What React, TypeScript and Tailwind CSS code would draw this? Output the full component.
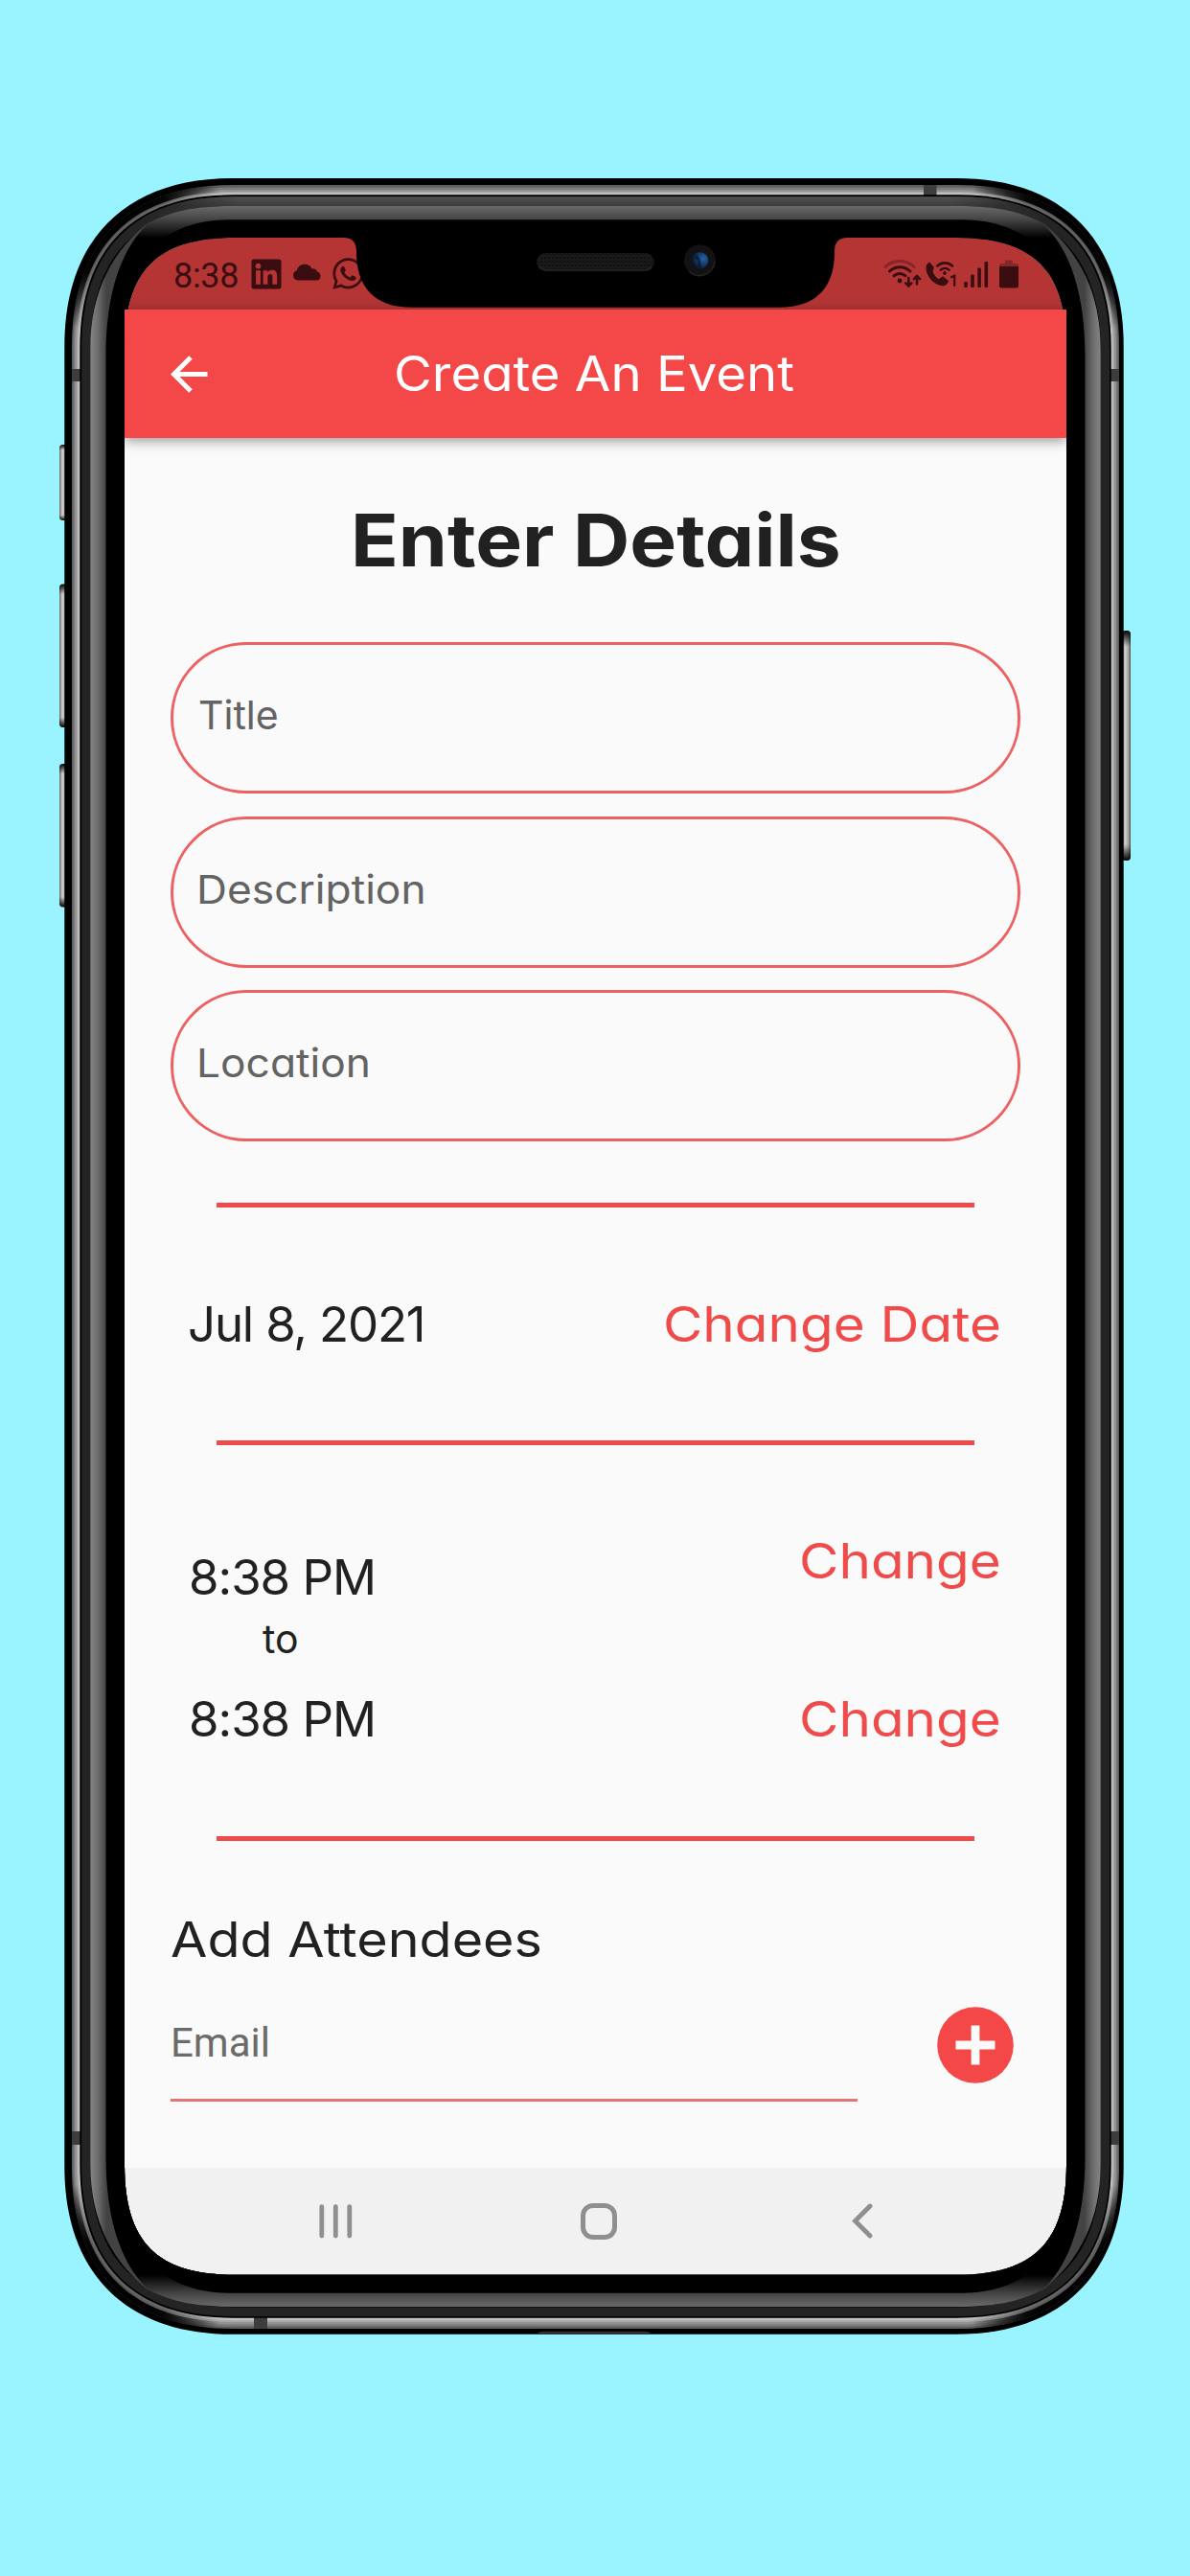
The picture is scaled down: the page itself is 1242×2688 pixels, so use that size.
import React from "react";
import { FaWhatsapp } from "react-icons/fa";

/* Rounded rectangle with soft, continuous corners. `e` is the corner extent. */
function softRect(x0: number, y0: number, x1: number, y1: number, e: number, a: number) {
  return (
    `M${x0 + e},${y0}H${x1 - e}C${x1 - a},${y0} ${x1},${y0 + a} ${x1},${y0 + e}` +
    `V${y1 - e}C${x1},${y1 - a} ${x1 - a},${y1} ${x1 - e},${y1}` +
    `H${x0 + e}C${x0 + a},${y1} ${x0},${y1 - a} ${x0},${y1 - e}` +
    `V${y0 + e}C${x0},${y0 + a} ${x0 + a},${y0} ${x0 + e},${y0}Z`
  );
}

const BODY = softRect(67.3, 186, 1172.7, 2435.8, 175, 64);
const SCREEN = softRect(130, 248, 1113, 2373.8, 115, 34);
const NOTCH =
  "M358,247 V248 C369,248 372,254 372,263 C372,300 391,320.8 430,320.8 H813 C852,320.8 871,300 871,263 C871,254 874,248 885,248 V247 Z";
const METAL = softRect(75, 193, 1168, 2430, 168, 60);
const METAL_INNER = softRect(83.3, 203.3, 1159.7, 2418.7, 160, 56);
const STRIP = softRect(85.2, 205.3, 1158, 2417, 158, 55);

const rings = [
  { d: METAL, fill: "#5f5e5f" },
  { d: softRect(76.5, 195.5, 1166.5, 2427.8, 166.5, 59), fill: "#7b797b" },
  { d: softRect(78, 198, 1165, 2425.4, 165, 58), fill: "#939193" },
];
const brightRings = [
  { d: softRect(80, 200, 1163, 2423, 163, 57), fill: "#aba9ab" },
  { d: softRect(81.6, 201.2, 1161.4, 2421, 161.5, 56.5), fill: "#c4c2c4" },
];

const corners: [number, number, number, number][] = [
  [0, 0, 1, 1],
  [1243, 0, -1, 1],
  [0, 2622, 1, -1],
  [1243, 2622, -1, -1],
];

function PhoneFrame() {
  return (
    <svg className="pointer-events-none absolute inset-0" width="1242" height="2688" viewBox="0 0 1242 2688" fill="none">
      <defs>
        <linearGradient id="side" x1="94" x2="111" y1="0" y2="0" gradientUnits="userSpaceOnUse">
          <stop offset="0" stopColor="#858585" />
          <stop offset="0.45" stopColor="#6e6e6e" />
          <stop offset="1" stopColor="#434343" />
        </linearGradient>
        <linearGradient id="cap" x1="0" x2="0" y1="215" y2="250" gradientUnits="userSpaceOnUse">
          <stop offset="0" stopColor="#6a6a6a" />
          <stop offset="0.42" stopColor="#424242" />
          <stop offset="0.95" stopColor="#000" />
        </linearGradient>
        <linearGradient id="strip" x1="0" x2="0" y1="205" y2="215" gradientUnits="userSpaceOnUse">
          <stop offset="0" stopColor="#525252" />
          <stop offset="1" stopColor="#3c3c3c" />
        </linearGradient>
        <linearGradient id="stripFade" x1="150" x2="250" y1="0" y2="0" gradientUnits="userSpaceOnUse">
          <stop offset="0" stopColor="#242424" />
          <stop offset="1" stopColor="#242424" stopOpacity="0" />
        </linearGradient>
        <radialGradient id="shade" cx="125" cy="240" r="112" gradientUnits="userSpaceOnUse">
          <stop offset="0" stopColor="#000" />
          <stop offset="0.5" stopColor="#000" stopOpacity="0.9" />
          <stop offset="1" stopColor="#000" stopOpacity="0" />
        </radialGradient>
        <linearGradient id="button" x1="0" x2="1" y1="0" y2="0">
          <stop offset="0" stopColor="#6b6b6b" />
          <stop offset="0.35" stopColor="#d2d2d2" />
          <stop offset="0.75" stopColor="#a2a2a2" />
          <stop offset="1" stopColor="#4a4a4a" />
        </linearGradient>
        <linearGradient id="buttonEnds" x1="0" x2="0" y1="0" y2="1">
          <stop offset="0" stopColor="#000" />
          <stop offset="0.07" stopColor="#000" stopOpacity="0" />
          <stop offset="0.93" stopColor="#000" stopOpacity="0" />
          <stop offset="1" stopColor="#000" />
        </linearGradient>
        <radialGradient id="lens" cx="0.7" cy="0.4" r="0.7">
          <stop offset="0" stopColor="#2166a8" />
          <stop offset="0.45" stopColor="#16406f" />
          <stop offset="1" stopColor="#071226" />
        </radialGradient>
        <pattern id="mesh" width="4" height="4" patternUnits="userSpaceOnUse">
          <rect width="4" height="4" fill="#191919" />
          <rect width="2" height="2" fill="#111" />
        </pattern>
        <clipPath id="metalClip">
          <path d={METAL} />
        </clipPath>
        <clipPath id="stripClip">
          <path d={STRIP} />
        </clipPath>
        <clipPath id="frameClip">
          <path clipRule="evenodd" d={`M0,0H1242V2688H0Z${SCREEN}`} />
        </clipPath>
      </defs>

      {/* volume and power keys */}
      {[
        [62, 464, 9, 79],
        [62, 609.5, 9, 149.5],
        [62, 797, 9, 149.5],
        [1171, 658, 9, 240],
      ].map(([x, y, w, h]) => (
        <g key={y}>
          <rect x={x} y={y} width={w} height={h} rx="4" fill="url(#button)" />
          <rect x={x} y={y} width={w} height={h} rx="4" fill="url(#buttonEnds)" />
        </g>
      ))}

      <g clipPath="url(#frameClip)">
        <path d={BODY} fill="#000" />
        <path d="M560,2436 Q562,2432.8 567,2432.8 H673 Q678,2432.8 680,2436Z" fill="#303030" />
        {rings.map((r) => (
          <path key={r.d} d={r.d} fill={r.fill} />
        ))}
        <g clipPath="url(#metalClip)">
          {corners.map(([x, y, sx, sy]) => (
            <circle key={`${x}-${y}`} cx="125" cy="240" r="112" fill="url(#shade)" transform={`translate(${x} ${y}) scale(${sx} ${sy})`} />
          ))}
        </g>
        {brightRings.map((r) => (
          <path key={r.d} d={r.d} fill={r.fill} />
        ))}
        <g clipPath="url(#metalClip)" opacity="0.5">
          {corners.map(([x, y, sx, sy]) => (
            <circle key={`${x}-${y}`} cx="125" cy="240" r="112" fill="url(#shade)" transform={`translate(${x} ${y}) scale(${sx} ${sy})`} />
          ))}
        </g>

        {/* antenna bands */}
        <g fill="#3d3d3d">
          <rect x="75" y="385" width="9" height="13" />
          <rect x="1159" y="385" width="9" height="13" />
          <rect x="75" y="2224" width="9" height="14" />
          <rect x="1159" y="2224" width="9" height="14" />
          <rect x="964" y="193" width="13.5" height="11" />
          <rect x="265" y="2418" width="14" height="12" />
        </g>

        <path d={METAL_INNER} fill="#000" />
        <path d={STRIP} fill="#242424" />
        <g clipPath="url(#stripClip)">
          <rect x="150" y="205" width="943" height="40" fill="url(#strip)" />
          <rect x="149" y="204.5" width="102" height="42" fill="url(#stripFade)" />
          <rect x="149" y="204.5" width="102" height="42" fill="url(#stripFade)" transform="translate(1243 0) scale(-1 1)" />
        </g>

        {/* polished bevel */}
        <path d={softRect(94.3, 215, 1148.7, 2407.6, 149, 51)} fill="#000" />
        {[
          [0, 1],
          [2622, -1],
        ].map(([y, s]) => (
          <path
            key={y}
            transform={`translate(0 ${y}) scale(1 ${s})`}
            fill="url(#cap)"
            d="M243,215 H1000 C1040,215 1068,221 1092,235 L1104,250 H1075 C1050,234 1030,229.3 1000,229.3 H243 C213,229.3 193,234 168,250 H139 L151,235 C175,221 203,215 243,215Z"
          />
        ))}
        {[
          [0, 1],
          [1243, -1],
        ].map(([x, s]) => (
          <path
            key={x}
            transform={`translate(${x} 0) scale(${s} 1)`}
            fill="url(#side)"
            d="M94.3,364 V2258 C94.3,2319 118,2362 158,2392 C128,2366 110.5,2320 110.5,2250 V372 C110.5,302 128,256 158,230 C118,260 94.3,303 94.3,364Z"
          />
        ))}
      </g>

      {/* notch */}
      <path d={NOTCH} fill="#000" />
      <rect x="560" y="264" width="123" height="19" rx="9.5" fill="url(#mesh)" />
      <path d="M563,278 Q566,282 571,282 H672 Q677,282 680,278" stroke="#242424" strokeWidth="1.5" />
      <circle cx="730.5" cy="271.7" r="16.5" fill="#121214" />
      <path d="M719,283 A16 16 0 0 0 746,273" stroke="#222" strokeWidth="1.5" />
      <circle cx="730.5" cy="271.7" r="8.8" fill="url(#lens)" />
      <path d="M726,267 Q731,271 730,279" stroke="#061022" strokeWidth="3" opacity="0.6" />
    </svg>
  );
}

function StatusBar() {
  return (
    <div className="flex h-[75px] items-start bg-[#b53535] pl-[51px] text-[#3a0d10]">
      <span className="mt-[17px] h-[46px] w-[81px] font-['Roboto',sans-serif] text-[36px] leading-[46px] tracking-[-0.3px]">8:38</span>
      <svg className="mt-[22px]" width="32" height="32" viewBox="0 0 32 32">
        <rect x="0.5" y="0.5" width="31" height="31" rx="2.5" fill="#3a0d10" />
        <g fill="#b53535">
          <circle cx="7.5" cy="7.6" r="2.9" />
          <rect x="5.1" y="12.2" width="4.8" height="14.6" />
          <path d="M12.6,12.2 H17.2 V14.2 C18,12.8 19.8,11.8 21.8,11.8 C26,11.8 27.2,14.5 27.2,18.4 V26.8 H22.4 V19.4 C22.4,17.6 22.2,16 20.2,16 C18,16 17.4,17.6 17.4,19.4 V26.8 H12.6Z" />
        </g>
      </svg>
      <svg className="mt-[27px] ml-[11px]" width="31" height="18" viewBox="0 0 31 18" fill="#3a0d10">
        <path d="M5.5,17.5 A5,5.2 0 0 1 4.8,7.3 A8.4,8.4 0 0 1 20.5,5.4 A5.6,5.6 0 0 1 26.2,8.6 A4.6,4.6 0 0 1 26,17.5Z" />
      </svg>
      <FaWhatsapp className="mt-[19px] ml-[9px] size-[37px]" />
      <div className="mt-[20px] ml-[540px] flex shrink-0 items-start">
        <svg width="42" height="34" viewBox="921 268 42 34" fill="none" strokeLinecap="round">
          <path d="M923,278.5 A22,22 0 0 1 953,278.5" stroke="#872629" strokeWidth="3" />
          <path d="M927.5,283 A15.5,15.5 0 0 1 949,283" stroke="#3a0d10" strokeWidth="3" />
          <path d="M932,287.8 A9,9 0 0 1 944,287.8" stroke="#3a0d10" strokeWidth="3" />
          <circle cx="938" cy="293" r="2.4" fill="#3a0d10" />
          <path d="M947.3,290 V298 M944.2,295.3 L947.3,298.4 L950.4,295.3 M956,296.5 V288.5 M952.9,291.2 L956,288.1 L959.1,291.2" stroke="#3a0d10" strokeWidth="2.6" />
        </svg>
        <svg className="ml-px" width="34" height="34" viewBox="964 268 34 34" fill="none" strokeLinecap="round">
          <path d="M969.3,273.6 C965.5,275 964.6,279.5 966.3,284.5 C969,291.5 975,297.3 982.5,298.3 C985.5,298.6 988.3,296 989,293 L983,288.3 L978.5,291.3 C975.8,289.5 973.6,286.7 972.6,283.6 L973.8,279 Z" fill="#3a0d10" />
          <path d="M977.3,277.5 A11.5,11.5 0 0 1 993,277.5 M980.8,281.6 A6.5,6.5 0 0 1 989.5,281.6" stroke="#3a0d10" strokeWidth="2.6" />
          <circle cx="985" cy="285" r="1.9" fill="#3a0d10" />
          <path d="M992,289.2 L995.2,287.8 V298" stroke="#3a0d10" strokeWidth="2.2" />
        </svg>
        <svg className="ml-[7px]" width="26" height="34" viewBox="1005 268 26 34" fill="#3a0d10">
          <rect x="1005.2" y="294" width="3.6" height="6" rx="1.2" />
          <rect x="1012.2" y="286.5" width="3.6" height="13.5" rx="1.2" />
          <rect x="1019.3" y="279.5" width="3.6" height="20.5" rx="1.2" />
          <rect x="1026.5" y="273" width="3.6" height="27" rx="1.2" />
        </svg>
        <svg className="ml-[11px]" width="20" height="34" viewBox="1042 268 20 34">
          <path d="M1048,271.5 H1056 V275 H1060 Q1062,275 1062,277 V280 H1042 V277 Q1042,275 1044,275 H1048Z" fill="#872629" />
          <path d="M1042,278 H1062 V298.5 Q1062,300.5 1060,300.5 H1044 Q1042,300.5 1042,298.5Z" fill="#3a0d10" />
        </svg>
      </div>
    </div>
  );
}

function AppBar() {
  return (
    <header className="relative z-10 flex h-[134px] items-center bg-[#f44747] pl-[48px] shadow-[0_3px_12px_rgba(0,0,0,0.4)]">
      <svg width="39" height="39" viewBox="0 0 39 39" fill="none" stroke="#fff" strokeWidth="5">
        <path d="M38.5,19.5 H4 M21,2 L3.5,19.5 L21,37" />
      </svg>
      <h1 className="ml-[194px] origin-left scale-x-[1.068] text-[51px] leading-[76px] whitespace-nowrap text-white">Create An Event</h1>
    </header>
  );
}

function Field({ label, wide }: { label: string; wide?: boolean }) {
  return (
    <div className="flex h-[158px] items-center rounded-full border-[3px] border-[#ec6262] pb-[6px] pl-[24px]">
      <span className={`text-[41px] leading-[50px] text-[#636363] ${wide ? "origin-left scale-x-[1.08]" : "pl-[2px]"}`}>{label}</span>
    </div>
  );
}

function Divider() {
  return <div className="mx-[48px] h-[5px] shrink-0 bg-[#ef4b4b]" />;
}

function Change({ label }: { label: string }) {
  return <button className="origin-right scale-x-[1.11] text-[51px] leading-[76px] whitespace-nowrap text-[#ef4b4b]">{label}</button>;
}

function Body() {
  return (
    <main className="flex h-[1805px] flex-col bg-[#fafafa] px-[48px] pt-[58px] text-[#212121]">
      <h2 className="ml-[188px] origin-left scale-x-[1.08] text-[76px] leading-[96px] font-bold whitespace-nowrap">Enter Details</h2>
      <div className="mt-[59px] flex flex-col gap-[23.5px]">
        <Field label="Title" />
        <Field label="Description" wide />
        <Field label="Location" wide />
      </div>
      <div className="mt-[64px]" />
      <Divider />
      <div className="flex h-[243px] items-center justify-between pr-[20px] pl-[18px]">
        <span className="text-[51px] leading-[76px] tracking-[-1.2px]">Jul 8, 2021</span>
        <Change label="Change Date" />
      </div>
      <Divider />
      <div className="flex h-[408px] justify-between pr-[20px] pl-[19px]">
        <div className="flex flex-col items-start pt-[100px]">
          <span className="text-[51px] leading-[76px] tracking-[-1.05px]">8:38 PM</span>
          <span className="mt-px ml-[77px] text-[41px] leading-[51px]">to</span>
          <span className="mt-[20px] text-[51px] leading-[76px] tracking-[-1.05px]">8:38 PM</span>
        </div>
        <div className="flex flex-col items-end gap-[89px] pt-[83px]">
          <Change label="Change" />
          <Change label="Change" />
        </div>
      </div>
      <Divider />
      <h3 className="mt-[65px] origin-left scale-x-[1.092] text-[51px] leading-[76px] whitespace-nowrap">Add Attendees</h3>
      <div className="flex items-start justify-between pr-[7px]">
        <div className="h-[131px] w-[717px] border-b-[3px] border-[#e57373] pt-[40px] font-['Roboto',sans-serif] text-[42px] leading-[60px] text-[#6b6b6b]">Email</div>
        <svg className="mt-[32px]" width="80" height="80" viewBox="0 0 80 80">
          <circle cx="40" cy="40" r="39.8" fill="#f44747" />
          <path d="M19.5,40 H60.5 M40,19.5 V60.5" stroke="#fafafa" strokeWidth="8.8" />
        </svg>
      </div>
    </main>
  );
}

function NavBar() {
  return (
    <nav className="flex h-[112px] items-center gap-[237px] bg-[#f1f1f1] pl-[201px]">
      <svg width="38" height="38" viewBox="0 0 38 38" fill="none" stroke="#8f8f8f" strokeWidth="4.8" strokeLinecap="round">
        <path d="M4.8,3.6 V34 M19.3,3.6 V34 M33.8,3.6 V34" />
      </svg>
      <svg width="38" height="38" viewBox="0 0 38 38" fill="none" stroke="#8f8f8f" strokeWidth="5">
        <rect x="2.5" y="2.5" width="33" height="33" rx="10.5" />
      </svg>
      <svg width="38" height="38" viewBox="0 0 38 38" fill="none" stroke="#8f8f8f" strokeWidth="4.8" strokeLinecap="round">
        <path d="M27,3 L11.5,18.5 L27,34" />
      </svg>
    </nav>
  );
}

export default function App() {
  return (
    <div className="relative h-[2688px] w-[1242px] overflow-hidden bg-[#99f4ff] pt-[248px] pl-[130px] font-['Inter',sans-serif] [font-feature-settings:'cv11']">
      <div className="flex w-[983px] flex-col overflow-hidden rounded-[50px]">
        <StatusBar />
        <AppBar />
        <Body />
        <NavBar />
      </div>
      <PhoneFrame />
    </div>
  );
}
